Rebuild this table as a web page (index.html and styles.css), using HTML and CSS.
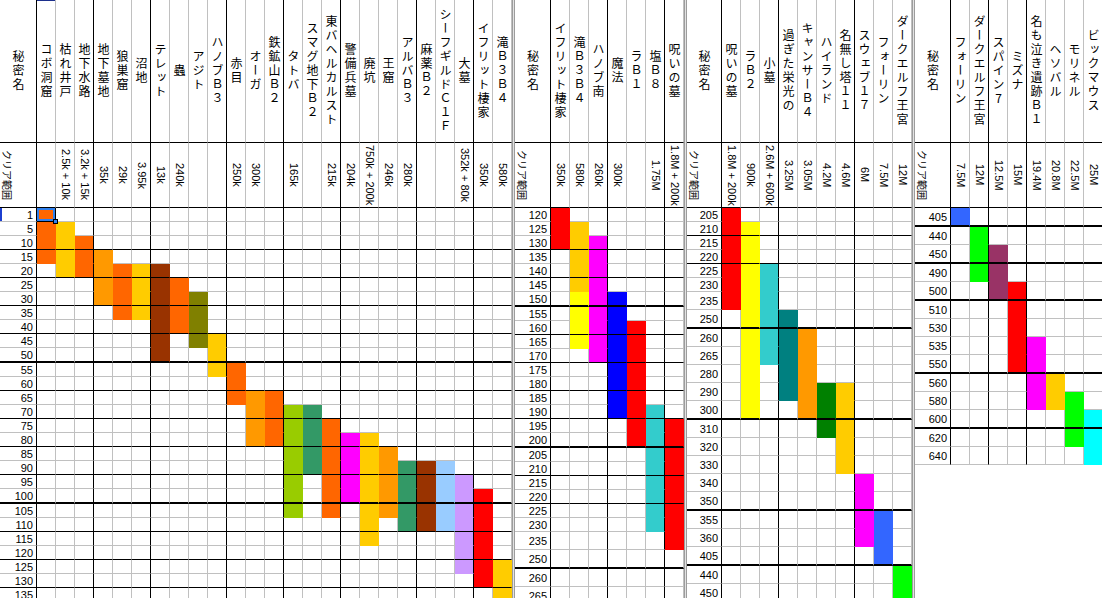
FILE: index.html
```html
<!DOCTYPE html>
<html lang="ja">
<head>
<meta charset="utf-8">
<title>秘密名 クリア範囲</title>
<link rel="stylesheet" href="styles.css">
</head>
<body>
<div class="sheet">

<table class="grid p1">
<thead>
<tr class="h1"><th><span class="v">秘密名</span></th><th class="cur"><span class="v">コボ洞窟</span></th><th><span class="v">枯れ井戸</span></th><th><span class="v">地下水路</span></th><th><span class="v">地下墓地</span></th><th><span class="v">狼巣窟</span></th><th><span class="v">沼地</span></th><th><span class="v">テレット</span></th><th><span class="v">蟲</span></th><th><span class="v">アジト</span></th><th><span class="v">ハノブＢ３</span></th><th><span class="v">赤目</span></th><th><span class="v">オーガ</span></th><th><span class="v">鉄鉱山Ｂ２</span></th><th><span class="v">タトバ</span></th><th><span class="v">スマグ地下Ｂ２</span></th><th><span class="v">東バヘルカルスト</span></th><th><span class="v">警備兵墓</span></th><th><span class="v">廃坑</span></th><th><span class="v">王窟</span></th><th><span class="v">アルバＢ３</span></th><th><span class="v">麻薬Ｂ２</span></th><th><span class="v">シーフギルドＣ１Ｆ</span></th><th><span class="v">大墓</span></th><th><span class="v">イフリット棲家</span></th><th><span class="v">滝Ｂ３Ｂ４</span></th></tr>
<tr class="h2"><th><span class="cl">クリア範囲</span></th><th></th><th><span class="r">2.5k + 10k</span></th><th><span class="r">3.2k + 15k</span></th><th><span class="r">35k</span></th><th><span class="r">29k</span></th><th><span class="r">3.95k</span></th><th><span class="r">13k</span></th><th><span class="r">240k</span></th><th></th><th></th><th><span class="r">250k</span></th><th><span class="r">300k</span></th><th></th><th><span class="r">165k</span></th><th></th><th><span class="r">215k</span></th><th><span class="r">204k</span></th><th><span class="r">750k + 200k</span></th><th><span class="r">246k</span></th><th><span class="r">280k</span></th><th></th><th></th><th><span class="r">352k + 80k</span></th><th><span class="r">350k</span></th><th><span class="r">580k</span></th></tr>
</thead>
<tbody>
<tr><th class="mark">1</th><td class="or sel"></td><td></td><td></td> <td></td><td></td><td></td> <td></td><td></td><td></td><td></td> <td></td><td></td><td></td> <td></td><td></td><td></td> <td></td><td></td><td></td><td></td> <td></td><td></td><td></td> <td></td><td></td></tr>
<tr><th>5</th><td class="or"></td><td class="gd"></td><td></td> <td></td><td></td><td></td> <td></td><td></td><td></td><td></td> <td></td><td></td><td></td> <td></td><td></td><td></td> <td></td><td></td><td></td><td></td> <td></td><td></td><td></td> <td></td><td></td></tr>
<tr class="k"><th>10</th><td class="or"></td><td class="gd"></td><td class="or"></td> <td></td><td></td><td></td> <td></td><td></td><td></td><td></td> <td></td><td></td><td></td> <td></td><td></td><td></td> <td></td><td></td><td></td><td></td> <td></td><td></td><td></td> <td></td><td></td></tr>
<tr><th>15</th><td class="or"></td><td class="gd"></td><td class="or"></td> <td class="og"></td><td></td><td></td> <td></td><td></td><td></td><td></td> <td></td><td></td><td></td> <td></td><td></td><td></td> <td></td><td></td><td></td><td></td> <td></td><td></td><td></td> <td></td><td></td></tr>
<tr class="k"><th>20</th><td></td><td class="gd"></td><td class="or"></td> <td class="og"></td><td class="or"></td><td class="gd"></td> <td class="br"></td><td></td><td></td><td></td> <td></td><td></td><td></td> <td></td><td></td><td></td> <td></td><td></td><td></td><td></td> <td></td><td></td><td></td> <td></td><td></td></tr>
<tr><th>25</th><td></td><td></td><td></td> <td class="og"></td><td class="or"></td><td class="gd"></td> <td class="br"></td><td class="or"></td><td></td><td></td> <td></td><td></td><td></td> <td></td><td></td><td></td> <td></td><td></td><td></td><td></td> <td></td><td></td><td></td> <td></td><td></td></tr>
<tr class="k"><th>30</th><td></td><td></td><td></td> <td class="og"></td><td class="or"></td><td class="gd"></td> <td class="br"></td><td class="or"></td><td class="ol"></td><td></td> <td></td><td></td><td></td> <td></td><td></td><td></td> <td></td><td></td><td></td><td></td> <td></td><td></td><td></td> <td></td><td></td></tr>
<tr><th>35</th><td></td><td></td><td></td> <td></td><td class="or"></td><td class="gd"></td> <td class="br"></td><td class="or"></td><td class="ol"></td><td></td> <td></td><td></td><td></td> <td></td><td></td><td></td> <td></td><td></td><td></td><td></td> <td></td><td></td><td></td> <td></td><td></td></tr>
<tr class="k"><th>40</th><td></td><td></td><td></td> <td></td><td></td><td></td> <td class="br"></td><td class="or"></td><td class="ol"></td><td></td> <td></td><td></td><td></td> <td></td><td></td><td></td> <td></td><td></td><td></td><td></td> <td></td><td></td><td></td> <td></td><td></td></tr>
<tr><th>45</th><td></td><td></td><td></td> <td></td><td></td><td></td> <td class="br"></td><td></td><td class="ol"></td><td class="gd"></td> <td></td><td></td><td></td> <td></td><td></td><td></td> <td></td><td></td><td></td><td></td> <td></td><td></td><td></td> <td></td><td></td></tr>
<tr class="x"><th>50</th><td></td><td></td><td></td> <td></td><td></td><td></td> <td class="br"></td><td></td><td></td><td class="gd"></td> <td></td><td></td><td></td> <td></td><td></td><td></td> <td></td><td></td><td></td><td></td> <td></td><td></td><td></td> <td></td><td></td></tr>
<tr><th>55</th><td></td><td></td><td></td> <td></td><td></td><td></td> <td></td><td></td><td></td><td class="gd"></td> <td class="or"></td><td></td><td></td> <td></td><td></td><td></td> <td></td><td></td><td></td><td></td> <td></td><td></td><td></td> <td></td><td></td></tr>
<tr class="k"><th>60</th><td></td><td></td><td></td> <td></td><td></td><td></td> <td></td><td></td><td></td><td></td> <td class="or"></td><td></td><td></td> <td></td><td></td><td></td> <td></td><td></td><td></td><td></td> <td></td><td></td><td></td> <td></td><td></td></tr>
<tr><th>65</th><td></td><td></td><td></td> <td></td><td></td><td></td> <td></td><td></td><td></td><td></td> <td class="or"></td><td class="og"></td><td class="or"></td> <td></td><td></td><td></td> <td></td><td></td><td></td><td></td> <td></td><td></td><td></td> <td></td><td></td></tr>
<tr class="k"><th>70</th><td></td><td></td><td></td> <td></td><td></td><td></td> <td></td><td></td><td></td><td></td> <td></td><td class="og"></td><td class="or"></td> <td class="yg"></td><td class="sg"></td><td></td> <td></td><td></td><td></td><td></td> <td></td><td></td><td></td> <td></td><td></td></tr>
<tr><th>75</th><td></td><td></td><td></td> <td></td><td></td><td></td> <td></td><td></td><td></td><td></td> <td></td><td class="og"></td><td class="or"></td> <td class="yg"></td><td class="sg"></td><td class="or"></td> <td></td><td></td><td></td><td></td> <td></td><td></td><td></td> <td></td><td></td></tr>
<tr class="k"><th>80</th><td></td><td></td><td></td> <td></td><td></td><td></td> <td></td><td></td><td></td><td></td> <td></td><td class="og"></td><td class="or"></td> <td class="yg"></td><td class="sg"></td><td class="or"></td> <td class="mg"></td><td class="gd"></td><td></td><td></td> <td></td><td></td><td></td> <td></td><td></td></tr>
<tr><th>85</th><td></td><td></td><td></td> <td></td><td></td><td></td> <td></td><td></td><td></td><td></td> <td></td><td></td><td></td> <td class="yg"></td><td class="sg"></td><td class="or"></td> <td class="mg"></td><td class="gd"></td><td class="og"></td><td></td> <td></td><td></td><td></td> <td></td><td></td></tr>
<tr class="k"><th>90</th><td></td><td></td><td></td> <td></td><td></td><td></td> <td></td><td></td><td></td><td></td> <td></td><td></td><td></td> <td class="yg"></td><td class="sg"></td><td class="or"></td> <td class="mg"></td><td class="gd"></td><td class="og"></td><td class="sg"></td> <td class="br"></td><td class="lb"></td><td></td> <td></td><td></td></tr>
<tr><th>95</th><td></td><td></td><td></td> <td></td><td></td><td></td> <td></td><td></td><td></td><td></td> <td></td><td></td><td></td> <td class="yg"></td><td></td><td class="or"></td> <td class="mg"></td><td class="gd"></td><td class="og"></td><td class="sg"></td> <td class="br"></td><td class="lb"></td><td class="lv"></td> <td></td><td></td></tr>
<tr class="x"><th>100</th><td></td><td></td><td></td> <td></td><td></td><td></td> <td></td><td></td><td></td><td></td> <td></td><td></td><td></td> <td class="yg"></td><td></td><td class="or"></td> <td class="mg"></td><td class="gd"></td><td class="og"></td><td class="sg"></td> <td class="br"></td><td class="lb"></td><td class="lv"></td> <td class="rd"></td><td></td></tr>
<tr><th>105</th><td></td><td></td><td></td> <td></td><td></td><td></td> <td></td><td></td><td></td><td></td> <td></td><td></td><td></td> <td class="yg"></td><td></td><td class="or"></td> <td></td><td class="gd"></td><td class="og"></td><td class="sg"></td> <td class="br"></td><td class="lb"></td><td class="lv"></td> <td class="rd"></td><td></td></tr>
<tr class="k"><th>110</th><td></td><td></td><td></td> <td></td><td></td><td></td> <td></td><td></td><td></td><td></td> <td></td><td></td><td></td> <td></td><td></td><td></td> <td></td><td class="gd"></td><td></td><td class="sg"></td> <td class="br"></td><td class="lb"></td><td class="lv"></td> <td class="rd"></td><td></td></tr>
<tr><th>115</th><td></td><td></td><td></td> <td></td><td></td><td></td> <td></td><td></td><td></td><td></td> <td></td><td></td><td></td> <td></td><td></td><td></td> <td></td><td class="gd"></td><td></td><td></td> <td></td><td></td><td class="lv"></td> <td class="rd"></td><td></td></tr>
<tr class="k"><th>120</th><td></td><td></td><td></td> <td></td><td></td><td></td> <td></td><td></td><td></td><td></td> <td></td><td></td><td></td> <td></td><td></td><td></td> <td></td><td></td><td></td><td></td> <td></td><td></td><td class="lv"></td> <td class="rd"></td><td></td></tr>
<tr><th>125</th><td></td><td></td><td></td> <td></td><td></td><td></td> <td></td><td></td><td></td><td></td> <td></td><td></td><td></td> <td></td><td></td><td></td> <td></td><td></td><td></td><td></td> <td></td><td></td><td class="lv"></td> <td class="rd"></td><td class="gd"></td></tr>
<tr class="k"><th>130</th><td></td><td></td><td></td> <td></td><td></td><td></td> <td></td><td></td><td></td><td></td> <td></td><td></td><td></td> <td></td><td></td><td></td> <td></td><td></td><td></td><td></td> <td></td><td></td><td></td> <td class="rd"></td><td class="gd"></td></tr>
<tr><th>135</th><td></td><td></td><td></td> <td></td><td></td><td></td> <td></td><td></td><td></td><td></td> <td></td><td></td><td></td> <td></td><td></td><td></td> <td></td><td></td><td></td><td></td> <td></td><td></td><td></td> <td></td><td class="gd"></td></tr>
</tbody>
</table>

<div class="split"></div>

<table class="grid p2">
<thead>
<tr class="h1"><th><span class="v">秘密名</span></th><th><span class="v">イフリット棲家</span></th><th><span class="v">滝Ｂ３Ｂ４</span></th><th><span class="v">ハノブ南</span></th><th><span class="v">魔法</span></th><th><span class="v">ラＢ１</span></th><th><span class="v">塩Ｂ８</span></th><th><span class="v">呪いの墓</span></th></tr>
<tr class="h2"><th><span class="cl">クリア範囲</span></th><th><span class="r">350k</span></th><th><span class="r">580k</span></th><th><span class="r">260k</span></th><th><span class="r">300k</span></th><th></th><th><span class="r">1.75M</span></th><th><span class="r">1.8M + 200k</span></th></tr>
</thead>
<tbody>
<tr><th>120</th><td class="rd"></td><td></td><td></td> <td></td><td></td><td></td> <td></td></tr>
<tr><th>125</th><td class="rd"></td><td class="gd"></td><td></td> <td></td><td></td><td></td> <td></td></tr>
<tr class="k"><th>130</th><td class="rd"></td><td class="gd"></td><td class="mg"></td> <td></td><td></td><td></td> <td></td></tr>
<tr><th>135</th><td></td><td class="gd"></td><td class="mg"></td> <td></td><td></td><td></td> <td></td></tr>
<tr class="k"><th>140</th><td></td><td class="gd"></td><td class="mg"></td> <td></td><td></td><td></td> <td></td></tr>
<tr><th>145</th><td></td><td class="gd"></td><td class="mg"></td> <td></td><td></td><td></td> <td></td></tr>
<tr class="x"><th>150</th><td></td><td class="yl"></td><td class="mg"></td> <td class="bl"></td><td></td><td></td> <td></td></tr>
<tr><th>155</th><td></td><td class="yl"></td><td class="mg"></td> <td class="bl"></td><td></td><td></td> <td></td></tr>
<tr class="k"><th>160</th><td></td><td class="yl"></td><td class="mg"></td> <td class="bl"></td><td class="rd"></td><td></td> <td></td></tr>
<tr><th>165</th><td></td><td class="yl"></td><td class="mg"></td> <td class="bl"></td><td class="rd"></td><td></td> <td></td></tr>
<tr class="k"><th>170</th><td></td><td></td><td class="mg"></td> <td class="bl"></td><td class="rd"></td><td></td> <td></td></tr>
<tr><th>175</th><td></td><td></td><td></td> <td class="bl"></td><td class="rd"></td><td></td> <td></td></tr>
<tr class="k"><th>180</th><td></td><td></td><td></td> <td class="bl"></td><td class="rd"></td><td></td> <td></td></tr>
<tr><th>185</th><td></td><td></td><td></td> <td class="bl"></td><td class="rd"></td><td></td> <td></td></tr>
<tr class="k"><th>190</th><td></td><td></td><td></td> <td class="bl"></td><td class="rd"></td><td class="tq"></td> <td></td></tr>
<tr><th>195</th><td></td><td></td><td></td> <td></td><td class="rd"></td><td class="tq"></td> <td class="rd"></td></tr>
<tr class="x"><th>200</th><td></td><td></td><td></td> <td></td><td class="rd"></td><td class="tq"></td> <td class="rd"></td></tr>
<tr><th>205</th><td></td><td></td><td></td> <td></td><td></td><td class="tq"></td> <td class="rd"></td></tr>
<tr class="k"><th>210</th><td></td><td></td><td></td> <td></td><td></td><td class="tq"></td> <td class="rd"></td></tr>
<tr><th>215</th><td></td><td></td><td></td> <td></td><td></td><td class="tq"></td> <td class="rd"></td></tr>
<tr class="k"><th>220</th><td></td><td></td><td></td> <td></td><td></td><td class="tq"></td> <td class="rd"></td></tr>
<tr><th>225</th><td></td><td></td><td></td> <td></td><td></td><td class="tq"></td> <td class="rd"></td></tr>
<tr><th>230</th><td></td><td></td><td></td> <td></td><td></td><td class="tq"></td> <td class="rd"></td></tr>
<tr class="t"><th>235</th><td></td><td></td><td></td> <td></td><td></td><td></td> <td class="rd"></td></tr>
<tr class="t x"><th>250</th><td></td><td></td><td></td> <td></td><td></td><td></td> <td></td></tr>
<tr class="t"><th>260</th><td></td><td></td><td></td> <td></td><td></td><td></td> <td></td></tr>
<tr class="t"><th>265</th><td></td><td></td><td></td> <td></td><td></td><td></td> <td></td></tr>
</tbody>
</table>

<div class="split"></div>

<table class="grid p3">
<thead>
<tr class="h1"><th><span class="v">秘密名</span></th><th><span class="v">呪いの墓</span></th><th><span class="v">ラＢ２</span></th><th><span class="v">小墓</span></th><th><span class="v">過ぎた栄光の</span></th><th><span class="v">キャンサーＢ４</span></th><th><span class="v">ハイランド</span></th><th><span class="v">名無し塔１１</span></th><th><span class="v">スウェブ１７</span></th><th><span class="v">フォーリン</span></th><th><span class="v">ダークエルフ王宮</span></th></tr>
<tr class="h2"><th><span class="cl">クリア範囲</span></th><th><span class="r">1.8M + 200k</span></th><th><span class="r">900k</span></th><th><span class="r">2.6M + 600k</span></th><th><span class="r">3.25M</span></th><th><span class="r">3.05M</span></th><th><span class="r">4.2M</span></th><th><span class="r">4.6M</span></th><th><span class="r">6M</span></th><th><span class="r">7.5M</span></th><th><span class="r">12M</span></th></tr>
</thead>
<tbody>
<tr><th>205</th><td class="rd"></td><td></td><td></td> <td></td><td></td><td></td><td></td> <td></td><td></td><td></td></tr>
<tr class="k"><th>210</th><td class="rd"></td><td class="yl"></td><td></td> <td></td><td></td><td></td><td></td> <td></td><td></td><td></td></tr>
<tr><th>215</th><td class="rd"></td><td class="yl"></td><td></td> <td></td><td></td><td></td><td></td> <td></td><td></td><td></td></tr>
<tr class="k"><th>220</th><td class="rd"></td><td class="yl"></td><td></td> <td></td><td></td><td></td><td></td> <td></td><td></td><td></td></tr>
<tr><th>225</th><td class="rd"></td><td class="yl"></td><td class="tq"></td> <td></td><td></td><td></td><td></td> <td></td><td></td><td></td></tr>
<tr><th>230</th><td class="rd"></td><td class="yl"></td><td class="tq"></td> <td></td><td></td><td></td><td></td> <td></td><td></td><td></td></tr>
<tr class="t"><th>235</th><td class="rd"></td><td class="yl"></td><td class="tq"></td> <td></td><td></td><td></td><td></td> <td></td><td></td><td></td></tr>
<tr class="t x"><th>250</th><td></td><td class="yl"></td><td class="tq"></td> <td class="tl"></td><td></td><td></td><td></td> <td></td><td></td><td></td></tr>
<tr class="t"><th>260</th><td></td><td class="yl"></td><td class="tq"></td> <td class="tl"></td><td class="og"></td><td></td><td></td> <td></td><td></td><td></td></tr>
<tr class="t"><th>265</th><td></td><td class="yl"></td><td class="tq"></td> <td class="tl"></td><td class="og"></td><td></td><td></td> <td></td><td></td><td></td></tr>
<tr class="t"><th>280</th><td></td><td class="yl"></td><td></td> <td class="tl"></td><td class="og"></td><td></td><td></td> <td></td><td></td><td></td></tr>
<tr class="t"><th>290</th><td></td><td class="yl"></td><td></td> <td class="tl"></td><td class="og"></td><td class="gr"></td><td class="gd"></td> <td></td><td></td><td></td></tr>
<tr class="t x"><th>300</th><td></td><td class="yl"></td><td></td> <td></td><td class="og"></td><td class="gr"></td><td class="gd"></td> <td></td><td></td><td></td></tr>
<tr class="t"><th>310</th><td></td><td></td><td></td> <td></td><td></td><td class="gr"></td><td class="gd"></td> <td></td><td></td><td></td></tr>
<tr class="t"><th>320</th><td></td><td></td><td></td> <td></td><td></td><td></td><td class="gd"></td> <td></td><td></td><td></td></tr>
<tr class="t"><th>330</th><td></td><td></td><td></td> <td></td><td></td><td></td><td class="gd"></td> <td></td><td></td><td></td></tr>
<tr class="t"><th>340</th><td></td><td></td><td></td> <td></td><td></td><td></td><td></td> <td class="mg"></td><td></td><td></td></tr>
<tr class="t x"><th>350</th><td></td><td></td><td></td> <td></td><td></td><td></td><td></td> <td class="mg"></td><td></td><td></td></tr>
<tr class="t"><th>355</th><td></td><td></td><td></td> <td></td><td></td><td></td><td></td> <td class="mg"></td><td class="b2"></td><td></td></tr>
<tr class="t"><th>360</th><td></td><td></td><td></td> <td></td><td></td><td></td><td></td> <td class="mg"></td><td class="b2"></td><td></td></tr>
<tr class="t x"><th>405</th><td></td><td></td><td></td> <td></td><td></td><td></td><td></td> <td></td><td class="b2"></td><td></td></tr>
<tr class="t"><th>440</th><td></td><td></td><td></td> <td></td><td></td><td></td><td></td> <td></td><td></td><td class="lm"></td></tr>
<tr class="t"><th>450</th><td></td><td></td><td></td> <td></td><td></td><td></td><td></td> <td></td><td></td><td class="lm"></td></tr>
</tbody>
</table>

<div class="split"></div>

<table class="grid p4">
<thead>
<tr class="h1"><th><span class="v">秘密名</span></th><th><span class="v">フォーリン</span></th><th><span class="v">ダークエルフ王宮</span></th><th><span class="v">スパイン7</span></th><th><span class="v">ミズナ</span></th><th><span class="v">名も泣き遺跡Ｂ１</span></th><th><span class="v">ヘソバル</span></th><th><span class="v">モリネル</span></th><th><span class="v">ビックマウス</span></th></tr>
<tr class="h2"><th><span class="cl">クリア範囲</span></th><th><span class="r">7.5M</span></th><th><span class="r">12M</span></th><th><span class="r">12.5M</span></th><th><span class="r">15M</span></th><th><span class="r">19.4M</span></th><th><span class="r">20.8M</span></th><th><span class="r">22.5M</span></th><th><span class="r">25M</span></th></tr>
</thead>
<tbody>
<tr class="t x"><th>405</th><td class="b2"></td><td></td> <td></td><td></td> <td></td><td></td><td></td><td></td></tr>
<tr class="t"><th>440</th><td></td><td class="lm"></td> <td></td><td></td> <td></td><td></td><td></td><td></td></tr>
<tr class="t x"><th>450</th><td></td><td class="lm"></td> <td class="pl"></td><td></td> <td></td><td></td><td></td><td></td></tr>
<tr class="t"><th>490</th><td></td><td class="lm"></td> <td class="pl"></td><td></td> <td></td><td></td><td></td><td></td></tr>
<tr class="t x"><th>500</th><td></td><td></td> <td class="pl"></td><td class="rd"></td> <td></td><td></td><td></td><td></td></tr>
<tr class="t"><th>510</th><td></td><td></td> <td></td><td class="rd"></td> <td></td><td></td><td></td><td></td></tr>
<tr class="t"><th>530</th><td></td><td></td> <td></td><td class="rd"></td> <td></td><td></td><td></td><td></td></tr>
<tr class="t"><th>535</th><td></td><td></td> <td></td><td class="rd"></td> <td class="mg"></td><td></td><td></td><td></td></tr>
<tr class="t x"><th>550</th><td></td><td></td> <td></td><td class="rd"></td> <td class="mg"></td><td></td><td></td><td></td></tr>
<tr class="t"><th>560</th><td></td><td></td> <td></td><td></td> <td class="mg"></td><td class="gd"></td><td></td><td></td></tr>
<tr class="t"><th>580</th><td></td><td></td> <td></td><td></td> <td class="mg"></td><td class="gd"></td><td class="lm"></td><td></td></tr>
<tr class="t x"><th>600</th><td></td><td></td> <td></td><td></td> <td></td><td></td><td class="lm"></td><td class="cy"></td></tr>
<tr class="t"><th>620</th><td></td><td></td> <td></td><td></td> <td></td><td></td><td class="lm"></td><td class="cy"></td></tr>
<tr class="t"><th>640</th><td></td><td></td> <td></td><td></td> <td></td><td></td><td></td><td class="cy"></td></tr>
</tbody>
</table>

</div>
</body>
</html>
```

FILE: styles.css
```css
html, body {
  margin: 0;
  padding: 0;
  background: #fff;
}

body {
  font-family: "Liberation Sans", "Noto Sans CJK JP", sans-serif;
  color: #000;
}

.sheet {
  display: flex;
  width: 1102px;
  height: 598px;
  overflow: hidden;
}

.split {
  flex: none;
  width: 3px;
  box-sizing: border-box;
  border-left: 1px solid #9c9c9c;
  border-right: 1px solid #9c9c9c;
  background: #e2e2e2;
}

.grid {
  flex: none;
  align-self: flex-start;
  border-collapse: separate;
  border-spacing: 0;
}

.grid th,
.grid td {
  box-sizing: border-box;
  width: 19px;
  height: 14px;
  padding: 0;
  border-style: solid;
  border-color: #c0c0c0;
  border-width: 0 1px 1px 0;
  font-weight: normal;
}

/* filled cells hide the light gridlines */
.grid td[class] {
  border-color: transparent;
}

.grid thead th {
  vertical-align: middle;
  text-align: center;
  font-family: "Noto Sans CJK JP", sans-serif;
  font-size: 12px;
  border-bottom-color: #000;
}

.grid .h1 > th { height: 143px; }
.grid .h2 > th { height: 65px; }

.grid tbody th {
  text-align: right;
  vertical-align: middle;
  padding-right: 3px;
  font: 11px/12px "Liberation Sans", sans-serif;
}

.grid tr.t > * { height: 18px; }
.grid tr.k > * { border-bottom-color: #000; }
.grid tr.x > * { border-bottom: 2px solid #000; height: 15px; }
.grid tr.t.x > * { height: 19px; }

.grid tr > :first-child { border-right-color: #000; }

.p1 tr > :first-child { width: 37px; }
.p2 tr > :first-child { width: 36px; }
.p3 tr > :first-child { width: 35px; }
.p4 tr > :first-child { width: 36px; }

.p1 tr > :nth-child(4),
.p1 tr > :nth-child(7),
.p1 tr > :nth-child(11),
.p1 tr > :nth-child(14),
.p1 tr > :nth-child(17),
.p1 tr > :nth-child(21),
.p1 tr > :nth-child(24),
.p2 tr > :nth-child(4),
.p2 tr > :nth-child(7),
.p3 tr > :nth-child(4),
.p3 tr > :nth-child(8),
.p4 tr > :nth-child(3),
.p4 tr > :nth-child(5) {
  border-right-color: #000;
}

/* vertical header names */
.v {
  display: block;
  margin: 0 auto;
  width: 14px;
  writing-mode: vertical-rl;
  text-orientation: upright;
  letter-spacing: 2px;
  line-height: 14px;
  white-space: nowrap;
}

/* rotated clear values */
.r {
  display: block;
  margin: 0 auto;
  width: 13px;
  height: 60px;
  writing-mode: vertical-rl;
  white-space: nowrap;
  text-align: center;
  font: 11px/13px "Liberation Sans", sans-serif;
}

.cl {
  display: block;
  width: 13px;
  height: 60px;
  margin-left: 1px;
  writing-mode: vertical-rl;
  text-orientation: sideways;
  white-space: nowrap;
  text-align: center;
  font-size: 10px;
  line-height: 13px;
}

/* fills */
.or { background: #ff6600; }
.gd { background: #ffcc00; }
.og { background: #ff9900; }
.br { background: #993300; }
.ol { background: #808000; }
.yg { background: #99cc00; }
.sg { background: #339966; }
.mg { background: #ff00ff; }
.lb { background: #99ccff; }
.lv { background: #cc99ff; }
.rd { background: #ff0000; }
.yl { background: #ffff00; }
.bl { background: #0000ff; }
.tq { background: #33cccc; }
.tl { background: #008080; }
.gr { background: #008000; }
.b2 { background: #3366ff; }
.lm { background: #00ff00; }
.pl { background: #993366; }
.cy { background: #00ffff; }

/* active cell */
.grid td.sel {
  position: relative;
  border-right-color: #000;
  border-bottom-color: #000;
  box-shadow: inset 0 0 0 2px #2f80ed;
}

.grid td.sel::after {
  content: "";
  position: absolute;
  right: -3px;
  bottom: -3px;
  width: 5px;
  height: 5px;
  box-sizing: border-box;
  background: #2f80ed;
  border: 1px solid #000;
}

.cur { box-shadow: inset 0 1px 0 #1c2f8c; }
.mark { box-shadow: inset 2px 0 0 #1c3fd0; }
```
